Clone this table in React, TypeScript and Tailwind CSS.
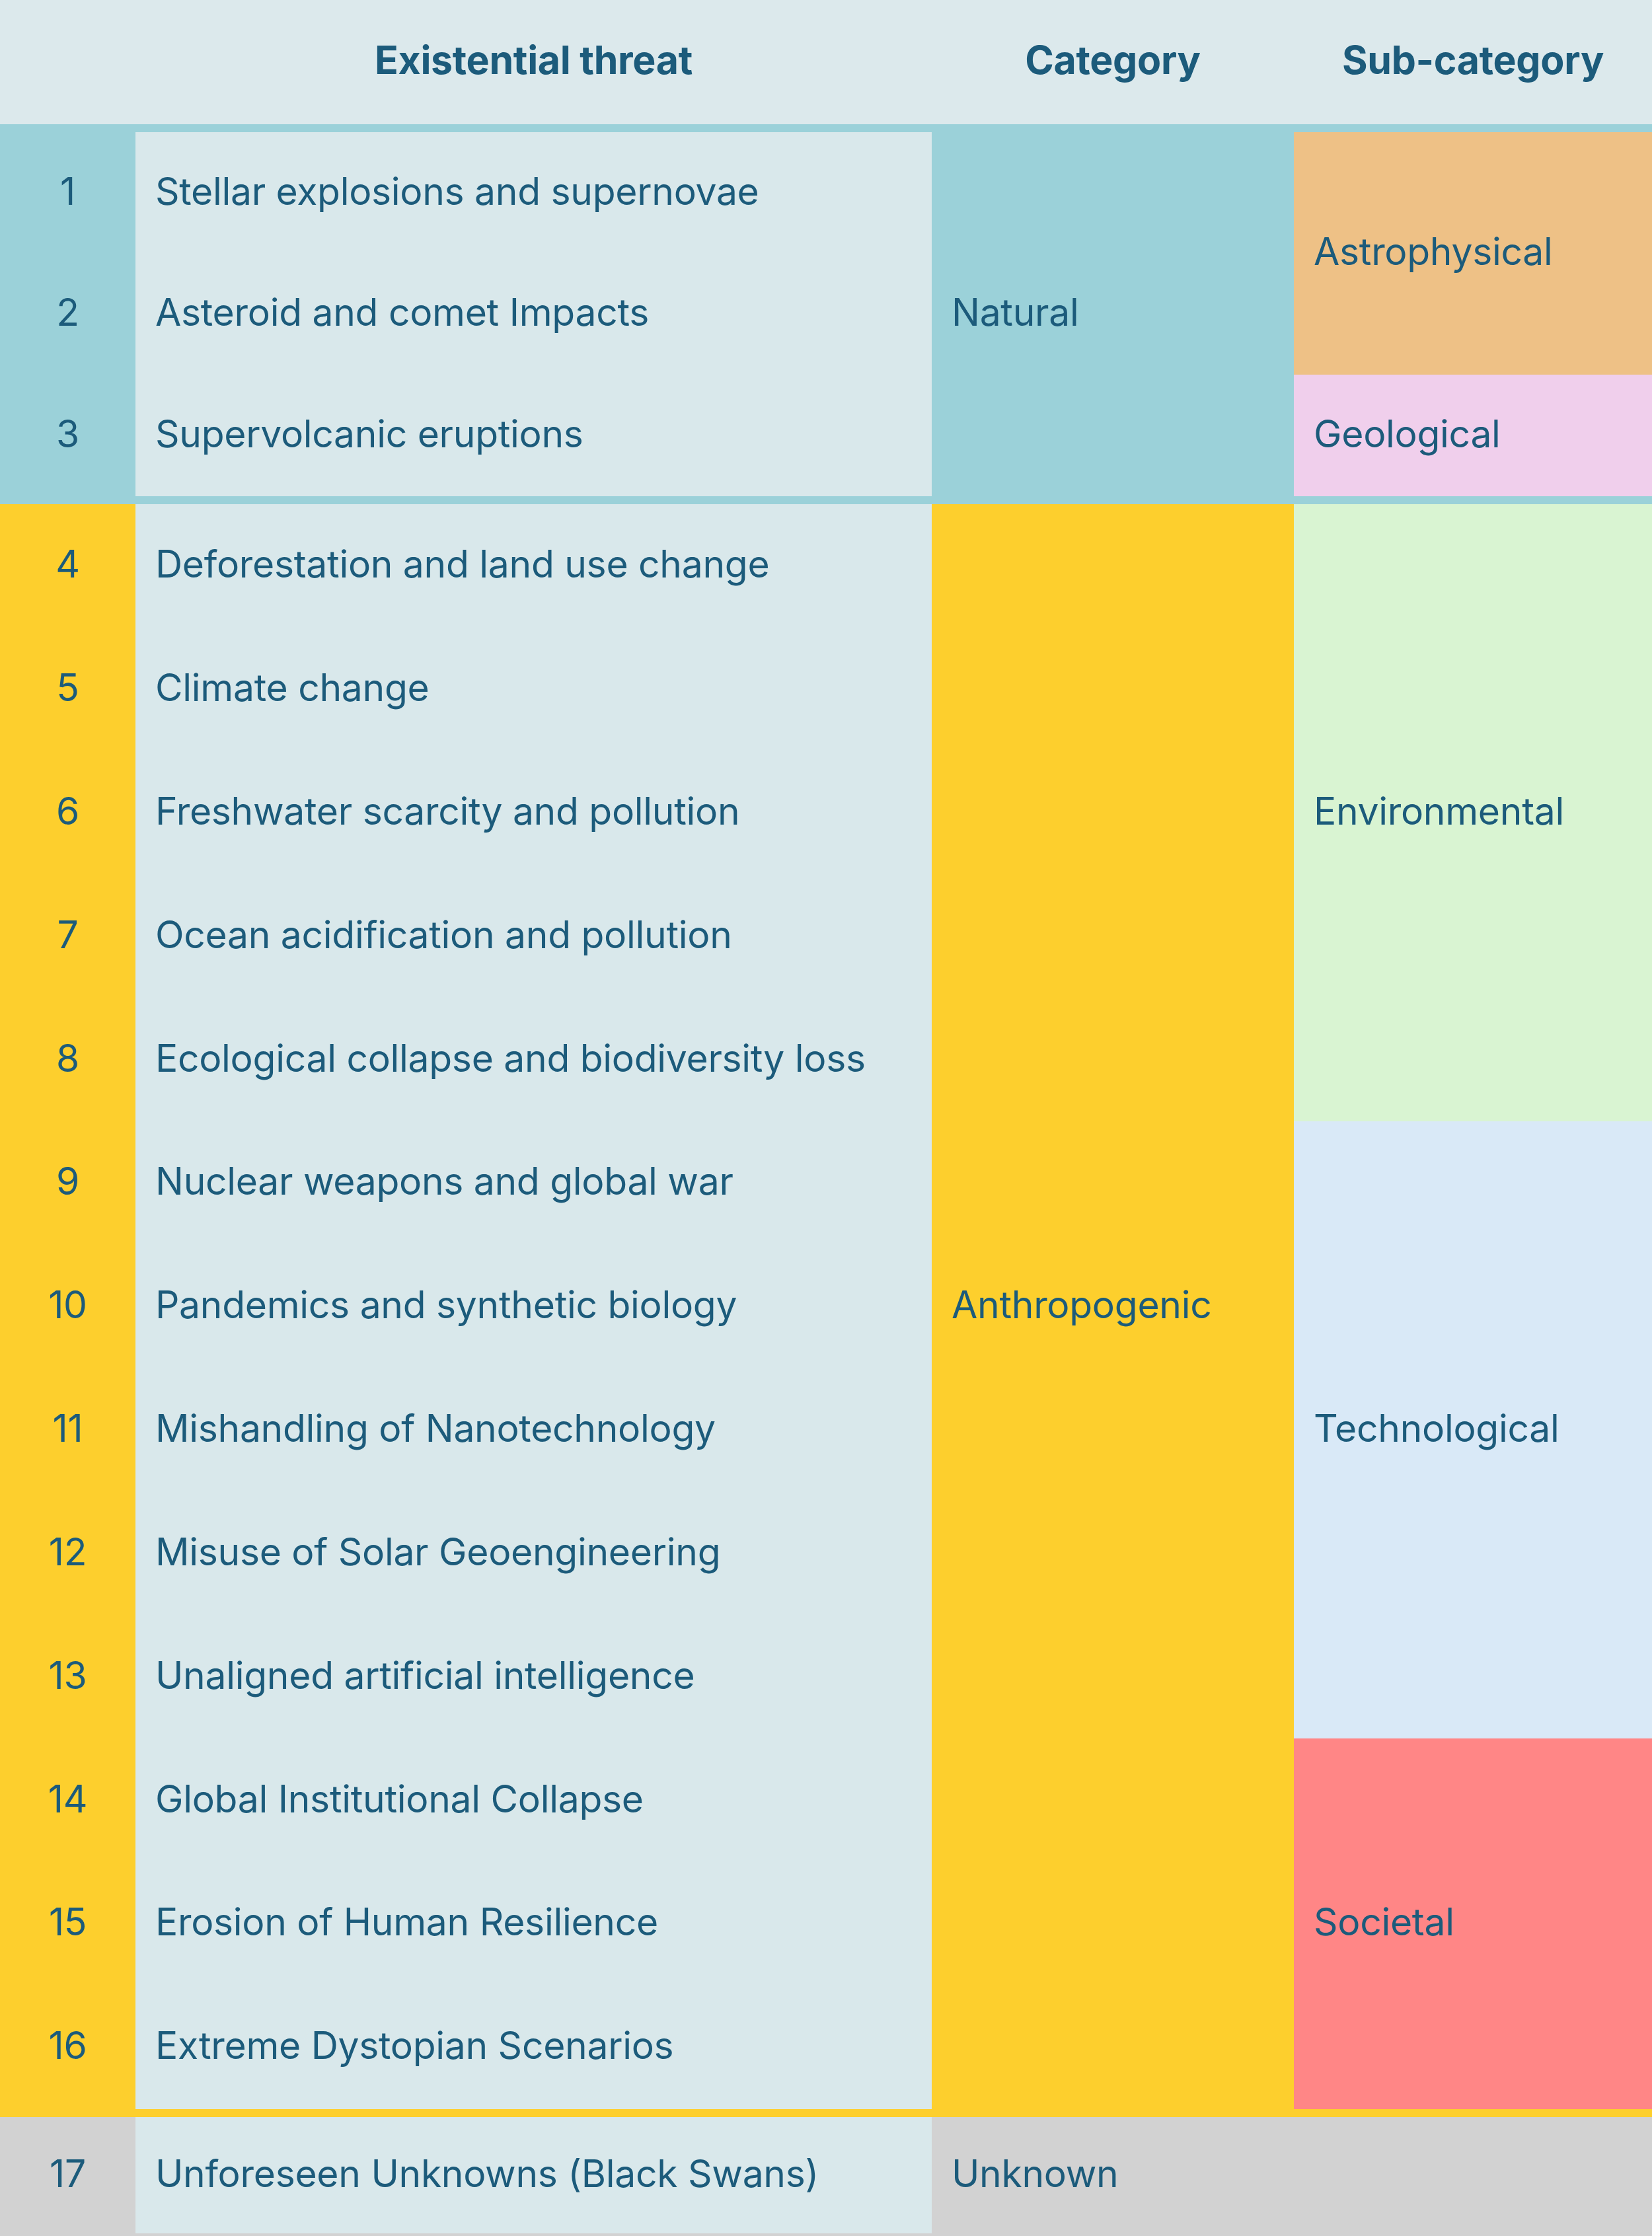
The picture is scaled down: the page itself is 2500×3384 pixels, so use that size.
import React from 'react';

const threats = [
  'Stellar explosions and supernovae',
  'Asteroid and comet Impacts',
  'Supervolcanic eruptions',
  'Deforestation and land use change',
  'Climate change',
  'Freshwater scarcity and pollution',
  'Ocean acidification and pollution',
  'Ecological collapse and biodiversity loss',
  'Nuclear weapons and global war',
  'Pandemics and synthetic biology',
  'Mishandling of Nanotechnology',
  'Misuse of Solar Geoengineering',
  'Unaligned artificial intelligence',
  'Global Institutional Collapse',
  'Erosion of Human Resilience',
  'Extreme Dystopian Scenarios',
  'Unforeseen Unknowns (Black Swans)',
];

const cols = 'grid grid-cols-[205px_1205px_548px_542px]';

const Num: React.FC<{ n: number; row: number }> = ({ n, row }) => (
  <div className="col-start-1 flex items-center justify-center pb-[5px]" style={{ gridRowStart: row }}>
    {n}
  </div>
);

const Threat: React.FC<{ label: string; row: number }> = ({ label, row }) => (
  <div className="col-start-2 flex items-center bg-[#d9e8eb] pb-[5px] pl-[30px]" style={{ gridRowStart: row }}>
    {label}
  </div>
);

export default function App() {
  return (
    <div className="h-[3384px] w-[2500px] overflow-hidden bg-[#dce9ec] font-['Inter',sans-serif] text-[57px] tracking-[-0.3px] text-[#1c5b7b]">
      {/* header */}
      <div className={`${cols} h-[188px] items-center pb-[6px] text-[59px] font-bold tracking-[-0.3px]`}>
        <div />
        <div className="text-center">Existential threat</div>
        <div className="text-center">Category</div>
        <div className="text-center">Sub-category</div>
      </div>

      {/* natural */}
      <div className="bg-[#9bd1d9] py-[12px]">
        <div className={`${cols} h-[551px] grid-rows-[repeat(3,minmax(0,1fr))]`}>
          {[0, 1, 2].map((i) => (
            <React.Fragment key={i}>
              <Num n={i + 1} row={i + 1} />
              <Threat label={threats[i]} row={i + 1} />
            </React.Fragment>
          ))}
          <div className="col-start-3 row-span-3 row-start-1 flex items-center pb-[5px] pl-[30px]">Natural</div>
          <div className="col-start-4 row-span-2 row-start-1 flex items-center bg-[#eec186] pb-[5px] pl-[30px]">Astrophysical</div>
          <div className="col-start-4 row-start-3 flex items-center bg-[#f0cfec] pb-[5px] pl-[30px]">Geological</div>
        </div>
      </div>

      {/* anthropogenic */}
      <div className="bg-[#fdcf2d] pb-[12px]">
        <div className={`${cols} h-[2429px] grid-rows-[repeat(13,minmax(0,1fr))]`}>
          {threats.slice(3, 16).map((t, i) => (
            <React.Fragment key={t}>
              <Num n={i + 4} row={i + 1} />
              <Threat label={t} row={i + 1} />
            </React.Fragment>
          ))}
          <div className="col-start-3 row-span-13 row-start-1 flex items-center pb-[5px] pl-[30px]">Anthropogenic</div>
          <div className="col-start-4 row-span-5 row-start-1 flex items-center bg-[#d9f4d2] pb-[5px] pl-[30px]">Environmental</div>
          <div className="col-start-4 row-span-5 row-start-6 flex items-center bg-[#d9e9f7] pb-[5px] pl-[30px]">Technological</div>
          <div className="col-start-4 row-span-3 row-start-11 flex items-center bg-[#ff8686] pb-[5px] pl-[30px]">Societal</div>
        </div>
      </div>

      {/* unknown */}
      <div className="bg-[#d2d2d2] pb-[12px]">
        <div className={`${cols} h-[176px]`}>
          <Num n={17} row={1} />
          <Threat label={threats[16]} row={1} />
          <div className="col-start-3 flex items-center pb-[5px] pl-[30px]">Unknown</div>
          <div className="col-start-4" />
        </div>
      </div>
    </div>
  );
}
